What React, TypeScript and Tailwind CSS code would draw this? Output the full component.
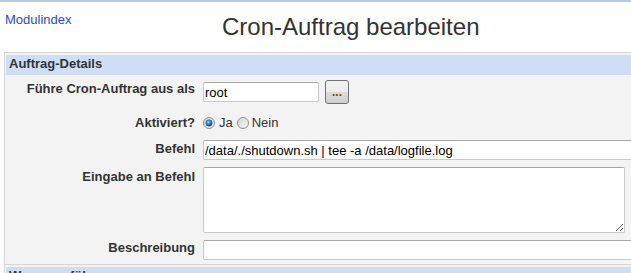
import React from "react";

// Windows-style radio button
function Radio({ checked }: { checked?: boolean }) {
  return (
    <svg width="12" height="12" viewBox="0 0 12 12" className="mt-[2px] shrink-0">
      <defs>
        <linearGradient id="rbg" x1="0" y1="0" x2="1" y2="1">
          <stop offset="0" stopColor="#d6d6d6" />
          <stop offset="1" stopColor="#f7f7f7" />
        </linearGradient>
        <radialGradient id="rdot" cx="0.4" cy="0.35" r="0.7">
          <stop offset="0" stopColor="#9fd8fb" />
          <stop offset="0.5" stopColor="#2b87d3" />
          <stop offset="1" stopColor="#0c3e7a" />
        </radialGradient>
      </defs>
      <circle cx="6" cy="6" r="5.5" fill="url(#rbg)" stroke="#8e8f8f" strokeWidth="1" />
      {checked && <circle cx="6" cy="6" r="3.2" fill="url(#rdot)" stroke="#1a4f8a" strokeWidth="0.6" />}
    </svg>
  );
}

const fieldCls =
  "bg-white border border-[#c9c9c9] border-t-[#a8a8a8] rounded-[2px] px-[1px] text-[13px] text-black outline-none";

export default function App() {
  return (
    <div className="w-[631px] h-[273px] overflow-hidden bg-white font-['Liberation_Sans',Arial,sans-serif] text-[13px] text-[#333]">
      <div className="w-[700px]">
        <div className="h-[2px] bg-[#b5c8e2]" />

        {/* Title row */}
        <div className="flex h-[50px]">
          <div className="w-[222px] pl-[5px] pt-[10px] leading-[15px]">
            <a href="#" className="text-[#2b4bd0]">Modulindex</a>
          </div>
          <h1 className="pt-[11px] text-[24px] leading-[28px] font-normal text-[#333]">
            Cron-Auftrag bearbeiten
          </h1>
        </div>

        {/* Details panel */}
        <section className="ml-[4px] border border-[#d6d6d6] bg-[#f3f3f3] pl-[1px] pt-[2px] pb-[4px]">
          <div className="h-[20px] bg-[#cfdef7] pl-[3px] font-bold leading-[18px]">Auftrag-Details</div>

          <div className="mt-[5px] flex items-start">
            <div className="w-[189px] pt-[1px] text-right font-bold leading-[15px]">Führe Cron-Auftrag aus als</div>
            <div className="ml-[8px] flex items-start">
              <input className={`${fieldCls} mt-[2px] h-[20px] w-[116px]`} defaultValue="root" />
              <button className="ml-[6px] h-[24px] w-[24px] rounded-[3px] border border-[#707070] bg-[linear-gradient(#f3f3f3_0%,#ececec_50%,#dcdcdc_50%,#d0d0d0_100%)] text-[12px] font-bold leading-[20px] text-[#7a4a00]">
                ...
              </button>
            </div>
          </div>

          <div className="mt-[10px] flex items-start">
            <div className="w-[189px] pt-[1px] text-right font-bold leading-[15px]">Aktiviert?</div>
            <div className="ml-[8px] flex items-start pt-[1px] leading-[15px]">
              <Radio checked />
              <span className="ml-[4px]">Ja</span>
              <span className="ml-[4px] flex"><Radio /></span>
              <span className="ml-[3px]">Nein</span>
            </div>
          </div>

          <div className="mt-[10px] flex items-start">
            <div className="w-[189px] pt-[1px] text-right font-bold leading-[15px]">Befehl</div>
            <input
              className={`${fieldCls} ml-[8px] h-[20px] w-[470px]`}
              defaultValue="/data/./shutdown.sh | tee -a /data/logfile.log"
            />
          </div>

          <div className="mt-[7px] flex items-start">
            <div className="w-[189px] pt-[2px] text-right font-bold leading-[15px]">Eingabe an Befehl</div>
            <textarea className={`${fieldCls} ml-[8px] h-[66px] w-[422px]`} />
          </div>

          <div className="mt-[7px] flex items-start">
            <div className="w-[189px] text-right font-bold leading-[15px]">Beschreibung</div>
            <input className={`${fieldCls} ml-[8px] h-[20px] w-[470px]`} />
          </div>
        </section>

        {/* Next panel (cut off by the window edge) */}
        <section className="ml-[4px] border-x border-[#d6d6d6] bg-[#f3f3f3] pl-[1px] pt-[2px]">
          <div className="h-[20px] bg-[#cfdef7] pl-[3px] font-bold leading-[18px]">Wann ausführen</div>
        </section>
      </div>
    </div>
  );
}
